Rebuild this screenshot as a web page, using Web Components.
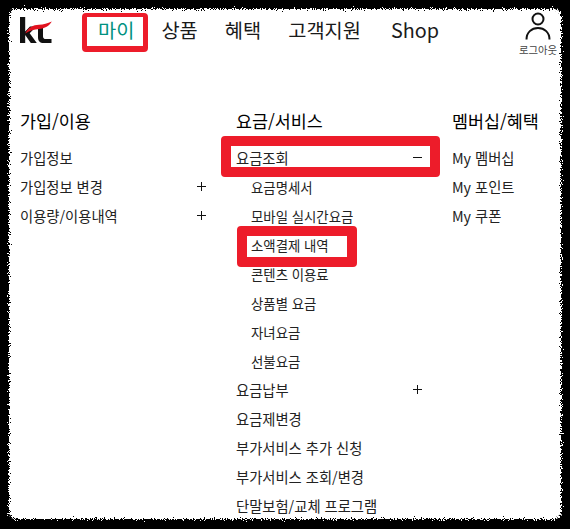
<!DOCTYPE html>
<html lang="ko"><head><meta charset="utf-8">
<style>
html,body{margin:0;padding:0;background:#000;height:529px;overflow:hidden}
body{font-family:"Noto Sans CJK KR","Noto Sans",sans-serif;color:#1a1a1a}
</style></head><body>
<template id="t-frame"><style>
:host{display:block;position:relative;box-sizing:border-box;width:570px;height:529px;padding:15px 8px 0 20px;background:#000;overflow:hidden}
.bg{position:absolute;left:9px;top:9px;width:552px;height:510px;background:#fff;border-radius:6px;filter:url(#rough)}
.c{position:relative}
</style>
<svg width="0" height="0" style="position:absolute"><filter id="rough" x="-5%" y="-5%" width="110%" height="110%" color-interpolation-filters="sRGB"><feTurbulence type="fractalNoise" baseFrequency="0.9" numOctaves="2" seed="4"/><feDisplacementMap in="SourceGraphic" scale="9" xChannelSelector="R" yChannelSelector="G"/></filter></svg>
<div class="bg"></div><div class="c"><slot></slot></div></template>
<template id="t-head"><style>
:host{display:flex;align-items:flex-start;height:50px}
.logo{width:32px;height:26px;margin-top:2px;flex:none}
nav{display:flex;margin-left:46px;font-size:19.8px;line-height:30px;margin-top:0}
.user{margin-left:auto;margin-right:3px;width:42px;display:flex;flex-direction:column;align-items:center;font-size:10.4px;line-height:12px;color:#444;margin-top:-3px;white-space:nowrap}
svg.u{width:28px;height:28px;display:block;margin-bottom:4px}
</style>
<svg class="logo" viewBox="0 0 32 26"><path d="M0 0h5.200v14.500l4.800-5h6.200l-6.500 6.700L16.800 26h-6L5.200 18V26H0z" fill="#111"/><path d="M18 9h5v10.200c0 1.900 1 2.800 2.800 2.800h5.700v4h-7.800c-3.800 0-5.700-2-5.700-5.800z" fill="#111"/><path d="M5.200 16.500C8.500 10.500 13 8 19 7.800c4.500-.2 8.500-1.200 12.800-3.300-2.500 4.500-7 7-12.800 7.400-5 .3-9 1.300-13.800 4.600z" fill="#e1121f"/></svg>
<nav><slot></slot></nav>
<div class="user"><svg class="u" viewBox="0 0 28 28" fill="none" stroke="#111" stroke-width="2"><circle cx="14" cy="7" r="5.500"/><path d="M2.500 27.500c0-7 5-11.500 11.500-11.500s11.500 4.500 11.500 11.500"/></svg>로그아웃</div>
</template>
<template id="t-link"><style>
:host{display:block;margin-right:27px}
:host([active]){color:#00917f}
:host([wide]){margin-right:30px}
</style><slot></slot></template>
<template id="t-col"><style>
:host{display:block;flex:none}
h2{margin:0 0 9px;font-size:17.4px;line-height:26px;font-weight:400;color:#000}
</style><h2><slot name="title"></slot></h2><slot></slot></template>
<template id="t-item"><style>
:host{display:flex;justify-content:space-between;height:29px;align-items:center;font-size:14.3px;line-height:20px;color:#222;white-space:nowrap}
:host([sub]){padding-left:15px;font-size:13.4px}
.m{width:9px;height:9px;position:relative;flex:none;display:none}
:host([mark="plus"]) .m,:host([mark="minus"]) .m{display:block}
.m::before{content:"";position:absolute;left:0;right:0;top:4px;height:1px;background:#111}
.m::after{content:"";position:absolute;top:0;bottom:0;left:4px;width:1px;background:#111}
:host([mark="minus"]) .m::after{display:none}
</style><span><slot></slot></span><i class="m"></i></template>
<template id="t-badge"><style>
:host{position:absolute;box-sizing:border-box;border:10px solid #ed1c2a;border-radius:4px;pointer-events:none}
</style></template>
<script>
const def=(n,id)=>customElements.define(n,class extends HTMLElement{constructor(){super();this.attachShadow({mode:"open"}).append(document.getElementById(id).content.cloneNode(true))}});
[["kt-frame","t-frame"],["kt-head","t-head"],["kt-link","t-link"],["kt-col","t-col"],["kt-item","t-item"],["kt-badge","t-badge"]].forEach(a=>def(...a));
</script>
<kt-frame>
<kt-head><kt-link active>마이</kt-link><kt-link>상품</kt-link><kt-link>혜택</kt-link><kt-link wide>고객지원</kt-link><kt-link>Shop</kt-link></kt-head>
<div style="display:flex;margin-top:43px">
<kt-col style="width:216px"><span slot="title">가입/이용</span>
<kt-item>가입정보</kt-item>
<kt-item mark="plus" style="margin-right:30px">가입정보 변경</kt-item>
<kt-item mark="plus" style="margin-right:30px">이용량/이용내역</kt-item>
</kt-col>
<kt-col style="width:216px"><span slot="title">요금/서비스</span>
<kt-item mark="minus" style="margin-right:30px">요금조회</kt-item>
<kt-item sub>요금명세서</kt-item>
<kt-item sub>모바일 실시간요금</kt-item>
<kt-item sub>소액결제 내역</kt-item>
<kt-item sub>콘텐츠 이용료</kt-item>
<kt-item sub>상품별 요금</kt-item>
<kt-item sub>자녀요금</kt-item>
<kt-item sub>선불요금</kt-item>
<kt-item mark="plus" style="margin-right:30px">요금납부</kt-item>
<kt-item>요금제변경</kt-item>
<kt-item>부가서비스 추가 신청</kt-item>
<kt-item>부가서비스 조회/변경</kt-item>
<kt-item>단말보험/교체 프로그램</kt-item>
</kt-col>
<kt-col><span slot="title">멤버십/혜택</span>
<kt-item>My 멤버십</kt-item>
<kt-item>My 포인트</kt-item>
<kt-item>My 쿠폰</kt-item>
</kt-col>
</div>
</kt-frame>
<kt-badge style="left:82px;top:13px;width:66px;height:39px;border-width:4px 5px 6px 5px"></kt-badge>
<kt-badge style="left:221px;top:136px;width:219px;height:41px"></kt-badge>
<kt-badge style="left:237px;top:226px;width:120px;height:41px"></kt-badge>
</body></html>
